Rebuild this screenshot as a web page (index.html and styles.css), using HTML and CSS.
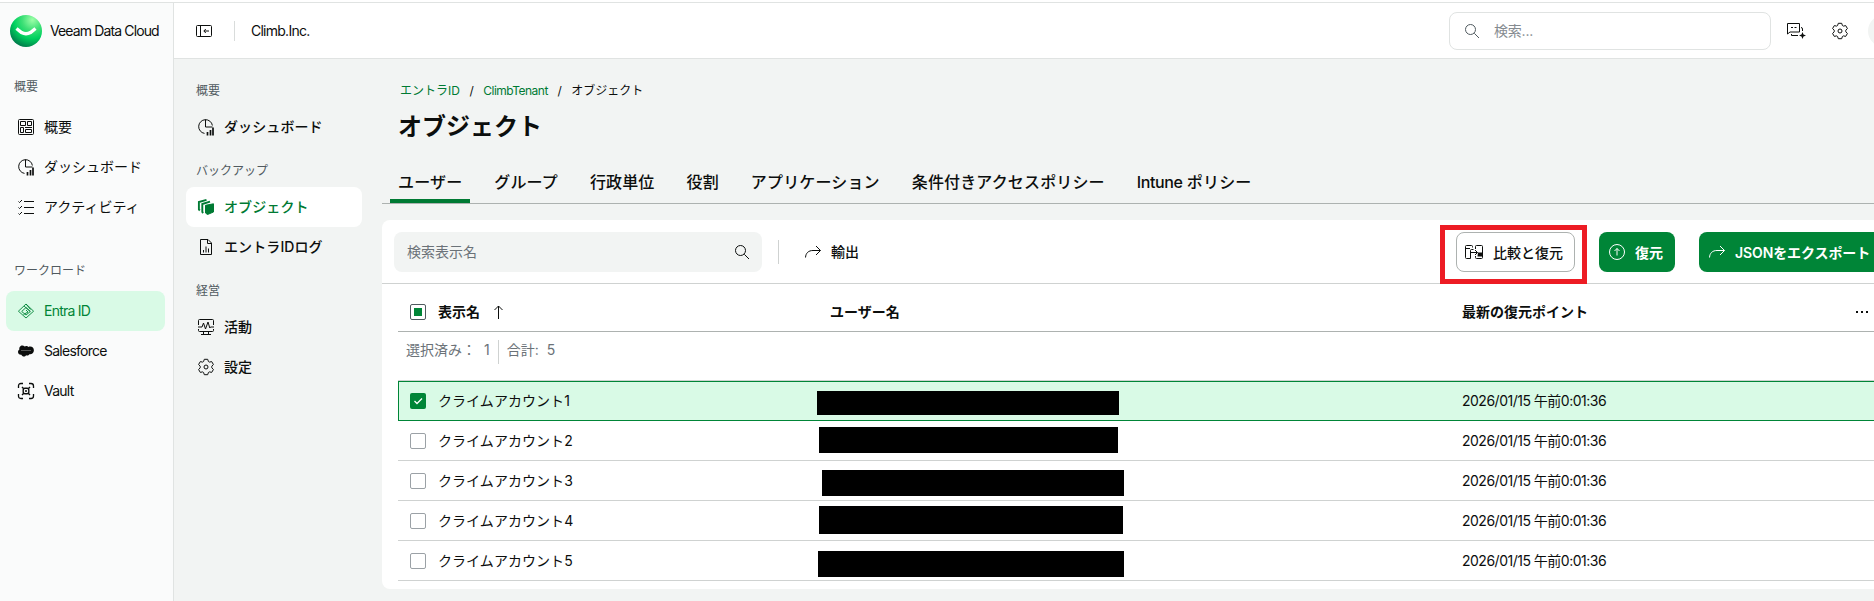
FILE: index.html
```html
<!DOCTYPE html>
<html lang="ja">
<head>
  <meta charset="UTF-8">
  <meta name="viewport" content="width=device-width, initial-scale=1.0">
  <title>Veeam Data Cloud</title>
  <link rel="stylesheet" href="styles.css">
</head>
<body>
<!-- Shared icons -->
<svg class="defs" width="0" height="0">
  <symbol id="i-dashboard" viewBox="0 0 16 16" overflow="visible">
    <path d="M6.500 14.400A6.900 6.900 0 1 1 14.400 6.500M7.500.500v7.500H14.500"/>
    <path d="M9.500 16.500v-3.500M12.500 16.500V11M15 16.500V8.500" stroke-width="1.700"/>
  </symbol>
  <symbol id="i-gear" viewBox="0 0 16 16" overflow="visible">
    <circle cx="8" cy="8" r="2"/>
    <path d="M6.300.3h3.400l.7 2.200 1 .6 2.300-.5 1.700 2.900L13.800 7.200v1.600l1.600 1.700-1.700 2.900-2.300-.5-1 .6-.7 2.200H6.300l-.7-2.200-1-.6-2.300.5L.6 10.500l1.600-1.700V7.200L.6 5.500l1.700-2.900 2.300.5 1-.6z" stroke-linejoin="round"/>
  </symbol>
  <symbol id="i-search" viewBox="0 0 16 16">
    <circle cx="6.500" cy="6.500" r="5"/>
    <path d="M10.300 10.300l4.700 4.700"/>
  </symbol>
  <symbol id="i-export" viewBox="0 0 16 16">
    <path d="M.5 13.500C.8 9 3.500 6.500 8 6.500h7.300M11 2l4.500 4.500L11 11"/>
  </symbol>
</svg>

<div class="app">
  <!-- Product sidebar -->
  <aside class="sidebar">
    <div class="brand">
      <svg class="brand-logo" viewBox="0 0 32 32">
        <defs>
          <radialGradient id="ball" cx=".7" cy=".15" r=".9">
            <stop offset="0" stop-color="#9dffa8"/>
            <stop offset=".35" stop-color="#3fe077"/>
            <stop offset=".65" stop-color="#00d15f"/>
            <stop offset="1" stop-color="#007a4a"/>
          </radialGradient>
        </defs>
        <circle cx="16" cy="16" r="16" fill="url(#ball)"/>
        <path d="M6.500 13.500l5 4q4.500 2.500 9 0l5-4" fill="none" stroke="#fff" stroke-width="3.400"/>
      </svg>
      <span>Veeam Data Cloud</span>
    </div>

    <div class="side-label">概要</div>
    <a class="side-item">
      <svg class="icon" viewBox="0 0 16 16"><rect x=".5" y=".5" width="15" height="15" rx="1"/><path d="M2.500 2.500h5v4h-5zM9.500 2.500h4v4h-4zM2.500 8.500h3v5h-3zM7.500 10.500h6v3h-6zM7 8.500h7"/></svg>
      概要
    </a>
    <a class="side-item"><svg class="icon"><use href="#i-dashboard"/></svg>ダッシュボード</a>
    <a class="side-item">
      <svg class="icon" viewBox="0 0 16 16"><path d="M6 2.500h10M6 8.500h10M6 14.500h10M.5 2.500l1 1L4 1M.5 8.500l1 1L4 7M.5 14.500l1 1L4 13"/></svg>
      アクティビティ
    </a>

    <div class="side-label side-label-work">ワークロード</div>
    <a class="side-item latin selected">
      <svg class="icon" viewBox="0 0 16 16"><path d="M8 1L15.600 8.200 8 15 .4 8.200zM8 4.500l4.300 4L8 12 3.700 8.500zM8 1l4.500 5.500M12.300 8.500L6 3M8 7l2 2-4.500 2.500" stroke-width=".9"/></svg>
      Entra ID
    </a>
    <a class="side-item latin">
      <svg class="icon" viewBox="0 0 16 16"><path class="solid" d="M6.700 3.600C7.500 2.700 9.400 2.500 10.300 4c3-1.200 5.700.6 5.600 3.500-.1 2.600-2.300 4.100-4.500 3.700-.7 1.300-2.200 1.600-3.300 1-.9 1.800-4 1.700-4.700-.5C1.400 12 0 10.600 0 9c0-1.200.6-2 1.400-2.500C.6 3.500 4.200 1 6.700 3.600z" stroke="none"/><path d="M3 7.500h10" stroke="#777" stroke-width=".7"/></svg>
      Salesforce
    </a>
    <a class="side-item latin">
      <svg class="icon" viewBox="0 0 16 16"><path d="M.5 5V3Q.5.500 3 .500h2M11 .500h2Q15.500.500 15.500 3v2M15.500 11v2q0 2.500-2.500 2.500h-2M5 15.500H3Q.5 15.500.5 13v-2" stroke-width="1.300"/><rect x="5.200" y="5.200" width="5.600" height="5.600" rx="1.800" stroke-width="1.400"/><circle cx="8" cy="8" r=".6" class="solid"/><path d="M4 4l1.500 1.500M12 4l-1.500 1.500M4 12l1.500-1.500M12 12l-1.500-1.500" stroke-width="1.400"/></svg>
      Vault
    </a>
  </aside>

  <div class="workspace">
    <header class="topbar">
      <svg class="icon" viewBox="0 0 16 16"><rect x=".5" y="2.500" width="15" height="11" rx="1"/><path d="M4.500 2.500v11M13 8H8M9.800 6L7.800 8l2 2"/></svg>
      <span class="topbar-line"></span>
      <span class="tenant">Climb.Inc.</span>
      <div class="global-search">
        <svg class="icon"><use href="#i-search"/></svg>
        <span>検索...</span>
      </div>
      <svg class="icon chat-icon" viewBox="0 0 20 16"><path d="M.5 11V.500h12v8.500H3L.5 11M4 4.500H6M7.500 4.500H9.500M14 4.500q1.500 0 1.500 1.500v2M4.500 11v1.500h6.500"/><path class="solid" d="M15.500 9l1 2.500 2.500 1-2.500 1-1 2.500-1-2.500-2.500-1 2.500-1z" stroke="none"/></svg>
      <svg class="icon gear-icon"><use href="#i-gear"/></svg>
      <span class="avatar"></span>
    </header>

    <div class="content">
      <!-- Workload navigation -->
      <nav class="subnav">
        <div class="sub-label">概要</div>
        <a class="sub-item"><svg class="icon"><use href="#i-dashboard"/></svg>ダッシュボード</a>
        <div class="sub-label">バックアップ</div>
        <a class="sub-item selected">
          <svg class="icon" viewBox="0 0 16 16"><path class="solid" d="M7.500 6.300L15.500 4.800V13L9.500 15.500l-2-1.500z"/><path d="M5.200 14l-.9-1V5L12 2.600M1.800 11.500l-.9-1V3L8.500.9" stroke-width="1.900"/></svg>
          オブジェクト
        </a>
        <a class="sub-item">
          <svg class="icon" viewBox="0 0 16 16"><path d="M2.500.500h7.500L13.500 4v11.500h-11zM9.500.500V4.500h4M5.500 13.500V11M8 13.500V7.500M10.500 13.500V9.500"/></svg>
          エントラIDログ
        </a>
        <div class="sub-label">経営</div>
        <a class="sub-item">
          <svg class="icon" viewBox="0 0 16 16"><path d="M.5 6v-4.500q0-1 1-1h13q1 0 1 1V6M.5 10v1.500q0 1 1 1h13q1 0 1-1V10M0 8h4l1.500-4 2 6L10 3l1.800 6 .7-1H16M5.500 12.500v3M10.500 12.500v3M3 15.500h10"/></svg>
          活動
        </a>
        <a class="sub-item"><svg class="icon"><use href="#i-gear"/></svg>設定</a>
      </nav>

      <main class="main">
        <div class="breadcrumb"><a>エントラID</a><i>/</i><a class="latin">ClimbTenant</a><i>/</i><span>オブジェクト</span></div>
        <h1>オブジェクト</h1>

        <div class="tabs">
          <a class="tab active">ユーザー</a>
          <a class="tab">グループ</a>
          <a class="tab">行政単位</a>
          <a class="tab">役割</a>
          <a class="tab">アプリケーション</a>
          <a class="tab">条件付きアクセスポリシー</a>
          <a class="tab"><span class="latin">Intune</span> ポリシー</a>
        </div>

        <section class="card">
          <div class="toolbar">
            <div class="table-search">
              <span>検索表示名</span>
              <svg class="icon"><use href="#i-search"/></svg>
            </div>
            <span class="toolbar-line"></span>
            <a class="export"><svg class="icon"><use href="#i-export"/></svg>輸出</a>
            <div class="actions">
              <button class="btn btn-outline">
                <svg class="icon compare-icon" viewBox="0 0 18 16"><path d="M7.500 3.500V2.500q0-1-1-1H1.500q-1 0-1 1V13.500q0 1 1 1H5.500M.5 4.500h4.500M5.500 14.500v-8q0-1 1-1h2M10.500 5V2.500q0-1 1-1h5q1 0 1 1v11q0 1-1 1h-5q-1 0-1-1V12M6 8.500h6.500M10 6l2.500 2.500L10 11"/><path class="solid" d="M13 8.500h4.500v4h-5z" stroke="none"/></svg>
                比較と復元
              </button>
              <button class="btn btn-green">
                <svg class="icon" viewBox="0 0 16 16"><circle cx="8" cy="8" r="7.500"/><path d="M8 11.500v-7M5.500 7L8 4.500 10.500 7"/></svg>
                復元
              </button>
              <button class="btn btn-green btn-json"><svg class="icon"><use href="#i-export"/></svg>JSONをエクスポート</button>
              <span class="highlight"></span>
            </div>
          </div>

          <div class="table">
            <div class="row head">
              <span class="check partial"></span>
              <span class="name">表示名<svg class="sort" viewBox="0 0 10 14"><path d="M4.500 14V1M.5 5l4-4 4 4"/></svg></span>
              <span class="user">ユーザー名</span>
              <span class="point">最新の復元ポイント</span>
              <span class="more"><b></b><b></b><b></b></span>
            </div>
            <div class="summary">
              <span>選択済み：</span><span class="num">1</span>
              <span class="summary-line"></span>
              <span>合計:</span><span class="num">5</span>
            </div>
            <div class="row checked">
              <span class="check on"><svg viewBox="0 0 16 16"><path d="M4.500 8l2.500 2.500 5-5"/></svg></span>
              <span class="name">クライムアカウント1</span>
              <span class="user"><span class="mask mask-1"></span></span>
              <span class="point">2026/01/15 午前0:01:36</span>
            </div>
            <div class="row">
              <span class="check"></span>
              <span class="name">クライムアカウント2</span>
              <span class="user"><span class="mask mask-2"></span></span>
              <span class="point">2026/01/15 午前0:01:36</span>
            </div>
            <div class="row">
              <span class="check"></span>
              <span class="name">クライムアカウント3</span>
              <span class="user"><span class="mask mask-3"></span></span>
              <span class="point">2026/01/15 午前0:01:36</span>
            </div>
            <div class="row">
              <span class="check"></span>
              <span class="name">クライムアカウント4</span>
              <span class="user"><span class="mask mask-4"></span></span>
              <span class="point">2026/01/15 午前0:01:36</span>
            </div>
            <div class="row">
              <span class="check"></span>
              <span class="name">クライムアカウント5</span>
              <span class="user"><span class="mask mask-5"></span></span>
              <span class="point">2026/01/15 午前0:01:36</span>
            </div>
          </div>
        </section>
      </main>
    </div>
  </div>
</div>
</body>
</html>
```

FILE: styles.css
```css
* {
  margin: 0;
  padding: 0;
  box-sizing: border-box;
}

body {
  font-family: Inter, "Noto Sans CJK JP", sans-serif;
  font-size: 14px;
  line-height: 20px;
  color: #0c0e0d;
  background: #fff;
  height: 601px;
  overflow: hidden;
  padding-top: 2px;
}

.defs {
  display: none;
}

.icon {
  width: 16px;
  height: 16px;
  flex: none;
  fill: none;
  stroke: currentColor;
  overflow: visible;
}

.solid {
  fill: currentColor;
}

.app {
  display: flex;
  height: 599px;
  border-top: 1px solid #e0e3e2;
  white-space: nowrap;
}

/* Left sidebar */
.sidebar {
  width: 174px;
  flex: none;
  background: #fafbfb;
  border-right: 1px solid #e0e3e2;
}

.brand {
  display: flex;
  align-items: center;
  gap: 8px;
  height: 56px;
  padding-left: 10px;
  letter-spacing: -0.87px;
}

.brand-logo {
  width: 32px;
  height: 32px;
}

.side-label,
.sub-label {
  font-size: 12px;
  color: #505a5f;
}

.side-label {
  height: 48px;
  padding: 18px 0 0 14px;
}

.side-label-work {
  height: 64px;
  padding-top: 34px;
}

.side-item,
.sub-item {
  display: flex;
  align-items: center;
  height: 40px;
  border-radius: 8px;
}

.side-item {
  gap: 10px;
  margin: 0 8px 0 6px;
  padding-left: 12px;
}

.side-item.latin {
  letter-spacing: -0.75px;
}

.side-item.selected {
  background: #d9fae6;
  color: #008537;
}

/* Header */
.workspace {
  flex: 1;
  min-width: 0;
}

.topbar {
  display: flex;
  align-items: center;
  height: 56px;
  padding-left: 22px;
  background: #fff;
  border-bottom: 1px solid #e0e3e2;
  overflow: hidden;
}

.topbar > .icon {
  margin-top: 1px;
}

.topbar-line {
  width: 1px;
  height: 20px;
  margin: 0 16px 0 22px;
  background: #d9dcdb;
}

.tenant {
  letter-spacing: -0.75px;
}

.global-search {
  display: flex;
  align-items: center;
  gap: 14px;
  flex: none;
  width: 322px;
  height: 38px;
  margin-left: auto;
  padding-left: 14px;
  border: 1px solid #e0e3e2;
  border-radius: 8px;
  color: #858b90;
}

.global-search span {
  letter-spacing: -0.2px;
}

.global-search .icon {
  color: #505a5f;
}

.chat-icon {
  width: 20px;
  margin: 0 25px 0 16px;
}

.avatar {
  flex: none;
  width: 32px;
  height: 32px;
  margin: 0 -26px 0 20px;
  border-radius: 50%;
  background: #f2f4f3;
}

.content {
  display: flex;
  height: 542px;
  background: #f2f4f3;
}

/* Second level navigation */
.subnav {
  width: 208px;
  flex: none;
  padding: 12px 20px 0 12px;
}

.sub-label {
  height: 40px;
  padding: 14px 0 0 10px;
}

.sub-label:first-child {
  height: 36px;
  padding-top: 10px;
}

.sub-item {
  gap: 10px;
  padding-left: 12px;
  font-weight: 500;
  letter-spacing: 0.1px;
}

.sub-item.selected {
  background: #fff;
  color: #007a33;
}

/* Page */
.main {
  flex: 1;
  min-width: 0;
}

.breadcrumb {
  display: flex;
  padding: 22px 0 0 18px;
  font-size: 12px;
}

.breadcrumb a {
  color: #007a33;
}

.breadcrumb .latin {
  letter-spacing: -0.5px;
}

.breadcrumb i {
  margin: 0 9.5px;
  font-style: normal;
}

h1 {
  height: 32px;
  margin: 10px 0 0 16px;
  font-size: 24px;
  line-height: 32px;
}

.tabs {
  display: flex;
  gap: 16px;
  height: 61px;
  padding: 17px 0 0 8px;
  border-bottom: 1px solid #adb2b0;
  font-size: 16px;
  font-weight: 500;
  letter-spacing: 0.15px;
}

.tabs .latin {
  letter-spacing: -0.4px;
}

.tab {
  height: 43px;
  padding: 12px 8px 0;
}

.tab.active {
  background: linear-gradient(#007a33, #007a33) bottom / 100% 4px no-repeat;
}

.card {
  margin-top: 16px;
  height: 369px;
  background: #fff;
  border-radius: 8px 0 0 8px;
}

.toolbar {
  display: flex;
  align-items: center;
  height: 64px;
  padding-left: 12px;
  border-bottom: 1px solid #cfd2d1;
}

.table-search {
  display: flex;
  align-items: center;
  justify-content: space-between;
  width: 368px;
  height: 40px;
  padding: 0 12px 0 13px;
  border-radius: 8px;
  background: #f2f4f3;
  color: #6b7278;
}

.table-search .icon {
  color: #0c0e0d;
}

.toolbar-line {
  width: 1px;
  height: 24px;
  margin: 0 26px 0 16px;
  background: #cfd2d1;
}

.export {
  display: flex;
  align-items: center;
  gap: 10px;
  font-weight: 500;
}

.actions {
  position: relative;
  display: flex;
  margin-left: auto;
  margin-right: -7px;
}

.btn {
  display: flex;
  align-items: center;
  gap: 10px;
  height: 40px;
  padding: 0 10px;
  border: none;
  border-radius: 8px;
  font-family: inherit;
  font-size: 14px;
  font-weight: 500;
  white-space: nowrap;
}

.btn-outline {
  width: 119px;
  padding: 0 8px;
  margin-right: 24px;
  border: 1px solid #adb2b0;
  background: #fff;
  color: #0c0e0d;
}

.compare-icon {
  width: 18px;
}

.btn-green {
  width: 76px;
  background: #008537;
  color: #fff;
  font-weight: 600;
}

.btn-json {
  width: 182px;
  margin-left: 24px;
  letter-spacing: -0.1px;
}

/* Red frame around the compare button */
.highlight {
  position: absolute;
  left: -16px;
  top: -7px;
  width: 147px;
  height: 59px;
  border: 5px solid #ed1c24;
}

/* Table */
.table {
  padding-left: 16px;
}

.row {
  display: grid;
  grid-template-columns: 28px 392px 632px 394px auto;
  align-items: center;
  height: 40px;
  padding-left: 12px;
  border-bottom: 1px solid #cfd2d1;
}

.row.head {
  height: 48px;
  padding-top: 8px;
  border-color: #adb2b0;
  font-weight: 600;
}

.row.checked {
  padding-left: 11px;
  border: 1px solid #008537;
  border-right: none;
  background: #d9fae6;
}

.check {
  width: 16px;
  height: 16px;
  border: 1px solid #9ba1a6;
  border-radius: 2px;
}

.check.partial {
  border-color: #505a5f;
  background: #008537 content-box;
  padding: 3px;
}

.check.on {
  border: none;
  background: #008537;
}

.check svg {
  display: block;
  fill: none;
  stroke: #fff;
  stroke-width: 1.3;
}

.name {
  letter-spacing: 0.05px;
}

.sort {
  width: 10px;
  height: 14px;
  margin-left: 14px;
  vertical-align: -2px;
  fill: none;
  stroke: #0c0e0d;
}

.more {
  display: flex;
  gap: 3px;
}

.more b {
  width: 2px;
  height: 2px;
  background: #0c0e0d;
}

.point {
  letter-spacing: -0.5px;
}

.head .point {
  letter-spacing: 0;
}

.summary {
  display: flex;
  align-items: center;
  height: 49px;
  padding: 0 0 12px 8px;
  border-bottom: 1px solid #cfd2d1;
  color: #6b7278;
}

.summary .num {
  margin-left: 8px;
}

.summary-line {
  width: 1px;
  height: 24px;
  margin: 3px 8px 0;
  background: #cfd2d1;
}

/* Blacked out user names */
.user {
  position: relative;
}

.mask {
  position: absolute;
  background: #000;
}

.mask-1 { left: -13px; top: -10px; width: 302px; height: 24px; }
.mask-2 { left: -11px; top: -13.5px; width: 299px; height: 26px; }
.mask-3 { left: -8px; top: -10.5px; width: 302px; height: 26px; }
.mask-4 { left: -11px; top: -14.5px; width: 304px; height: 28px; }
.mask-5 { left: -12px; top: -9.5px; width: 306px; height: 26px; }
```
